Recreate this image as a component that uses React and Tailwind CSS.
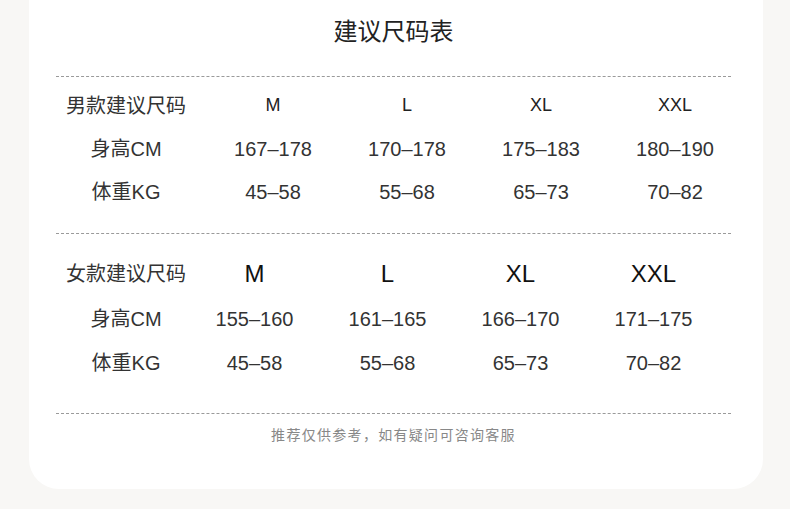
const men = {
  title: "男款建议尺码",
  sizes: ["M", "L", "XL", "XXL"],
  rows: [
    { label: "身高CM", values: ["167–178", "170–178", "175–183", "180–190"] },
    { label: "体重KG", values: ["45–58", "55–68", "65–73", "70–82"] },
  ],
}

const women = {
  title: "女款建议尺码",
  sizes: ["M", "L", "XL", "XXL"],
  rows: [
    { label: "身高CM", values: ["155–160", "161–165", "166–170", "171–175"] },
    { label: "体重KG", values: ["45–58", "55–68", "65–73", "70–82"] },
  ],
}

const font = { fontFamily: '"Liberation Sans", Arial, "Noto Sans CJK SC", sans-serif' }

function Divider() {
  return <div className="w-[675px] border-t border-dashed border-[#9a9a9a]" />
}

function MenTable({ data }) {
  return (
    <div className="flex flex-col pt-[7px] pb-[20px]">
      <div className="flex h-[43px] items-center">
        <div className="w-[140px] text-center text-[20px] text-[#333]">{data.title}</div>
        <div className="ml-[10px] grid grid-cols-[repeat(4,134px)]">
          {data.sizes.map((s) => (
            <div key={s} className="text-center text-[18px] text-[#222]">{s}</div>
          ))}
        </div>
      </div>
      {data.rows.map((r) => (
        <div key={r.label} className="flex h-[43px] items-center">
          <div className="w-[140px] text-center text-[20px] text-[#333]">{r.label}</div>
          <div className="ml-[10px] grid grid-cols-[repeat(4,134px)]">
            {r.values.map((v, i) => (
              <div key={i} className="text-center text-[20px] text-[#333]">{v}</div>
            ))}
          </div>
        </div>
      ))}
    </div>
  )
}

function WomenTable({ data }) {
  return (
    <div className="flex flex-col pt-[17px] pb-[28px]">
      <div className="flex h-[46px] items-center">
        <div className="w-[140px] text-center text-[20px] text-[#333]">{data.title}</div>
        <div className="-ml-[8px] grid grid-cols-[repeat(4,133px)]">
          {data.sizes.map((s) => (
            <div key={s} className="text-center text-[24px] text-[#111]">{s}</div>
          ))}
        </div>
      </div>
      {data.rows.map((r) => (
        <div key={r.label} className="flex h-[44px] items-center">
          <div className="w-[140px] text-center text-[20px] text-[#333]">{r.label}</div>
          <div className="-ml-[8px] grid grid-cols-[repeat(4,133px)]">
            {r.values.map((v, i) => (
              <div key={i} className="text-center text-[20px] text-[#333]">{v}</div>
            ))}
          </div>
        </div>
      ))}
    </div>
  )
}

export default function App() {
  return (
    <div className="h-[509px] w-[790px] bg-[#f8f7f5]" style={font}>
      <div className="ml-[29px] flex h-[489px] w-[734px] flex-col rounded-b-[30px] bg-white pl-[27px]">
        <div className="w-[675px] pt-[16px] text-center text-[24px] leading-[32px] text-[#222]">建议尺码表</div>
        <div className="mt-[28px]">
          <Divider />
        </div>
        <MenTable data={men} />
        <Divider />
        <WomenTable data={women} />
        <Divider />
        <div className="mt-[11px] w-[675px] text-center text-[14px] leading-[20px] tracking-[1.3px] text-[#888]">
          推荐仅供参考，如有疑问可咨询客服
        </div>
      </div>
    </div>
  )
}
